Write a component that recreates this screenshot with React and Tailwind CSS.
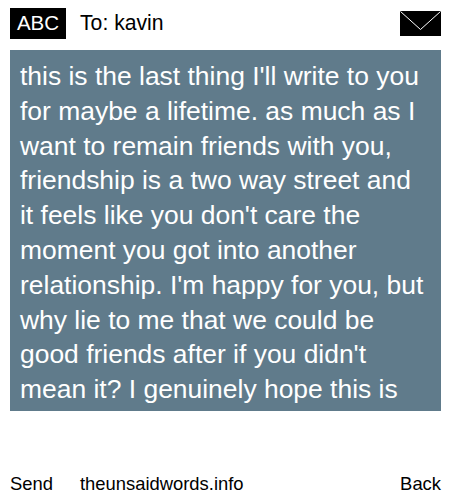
const lines = [
  "this is the last thing I'll write to you",
  'for maybe a lifetime. as much as I',
  'want to remain friends with you,',
  'friendship is a two way street and',
  "it feels like you don't care the",
  'moment you got into another',
  "relationship. I'm happy for you, but",
  'why lie to me that we could be',
  "good friends after if you didn't",
  'mean it? I genuinely hope this is',
]

export default function App() {
  return (
    <div className="w-[450px] h-[500px] bg-white text-black flex flex-col font-['Liberation_Sans',Arial,sans-serif]">
      <div className="h-[50px] pl-[10px] pr-[9px] pb-[3px] flex items-center">
        <div className="w-[56px] h-[31px] pb-[1px] bg-black text-white text-[20.5px] flex items-center justify-center">ABC</div>
        <div className="ml-[14px] mb-[1px] text-[21.2px]">To: kavin</div>
        <svg className="ml-auto mb-[1px]" width="41" height="25" viewBox="0 0 41 25">
          <rect width="41" height="25" fill="#000" />
          <path d="M0.5 0.5 L20.5 18.5 L40.5 0.5" fill="none" stroke="#fff" strokeWidth="1" />
        </svg>
      </div>
      <div className="ml-[10px] mr-[9px] h-[361px] bg-[#607b8b] text-white text-[26.45px] leading-[34.8px] pl-[10px] pt-[9px] overflow-hidden whitespace-nowrap">
        {lines.map((l, i) => <div key={i}>{l}</div>)}
      </div>
      <div className="mt-auto h-[33px] pl-[10px] pr-[9px] flex items-center text-[18.4px]">
        <span>Send</span>
        <span className="ml-[27px]">theunsaidwords.info</span>
        <span className="ml-auto">Back</span>
      </div>
    </div>
  )
}
